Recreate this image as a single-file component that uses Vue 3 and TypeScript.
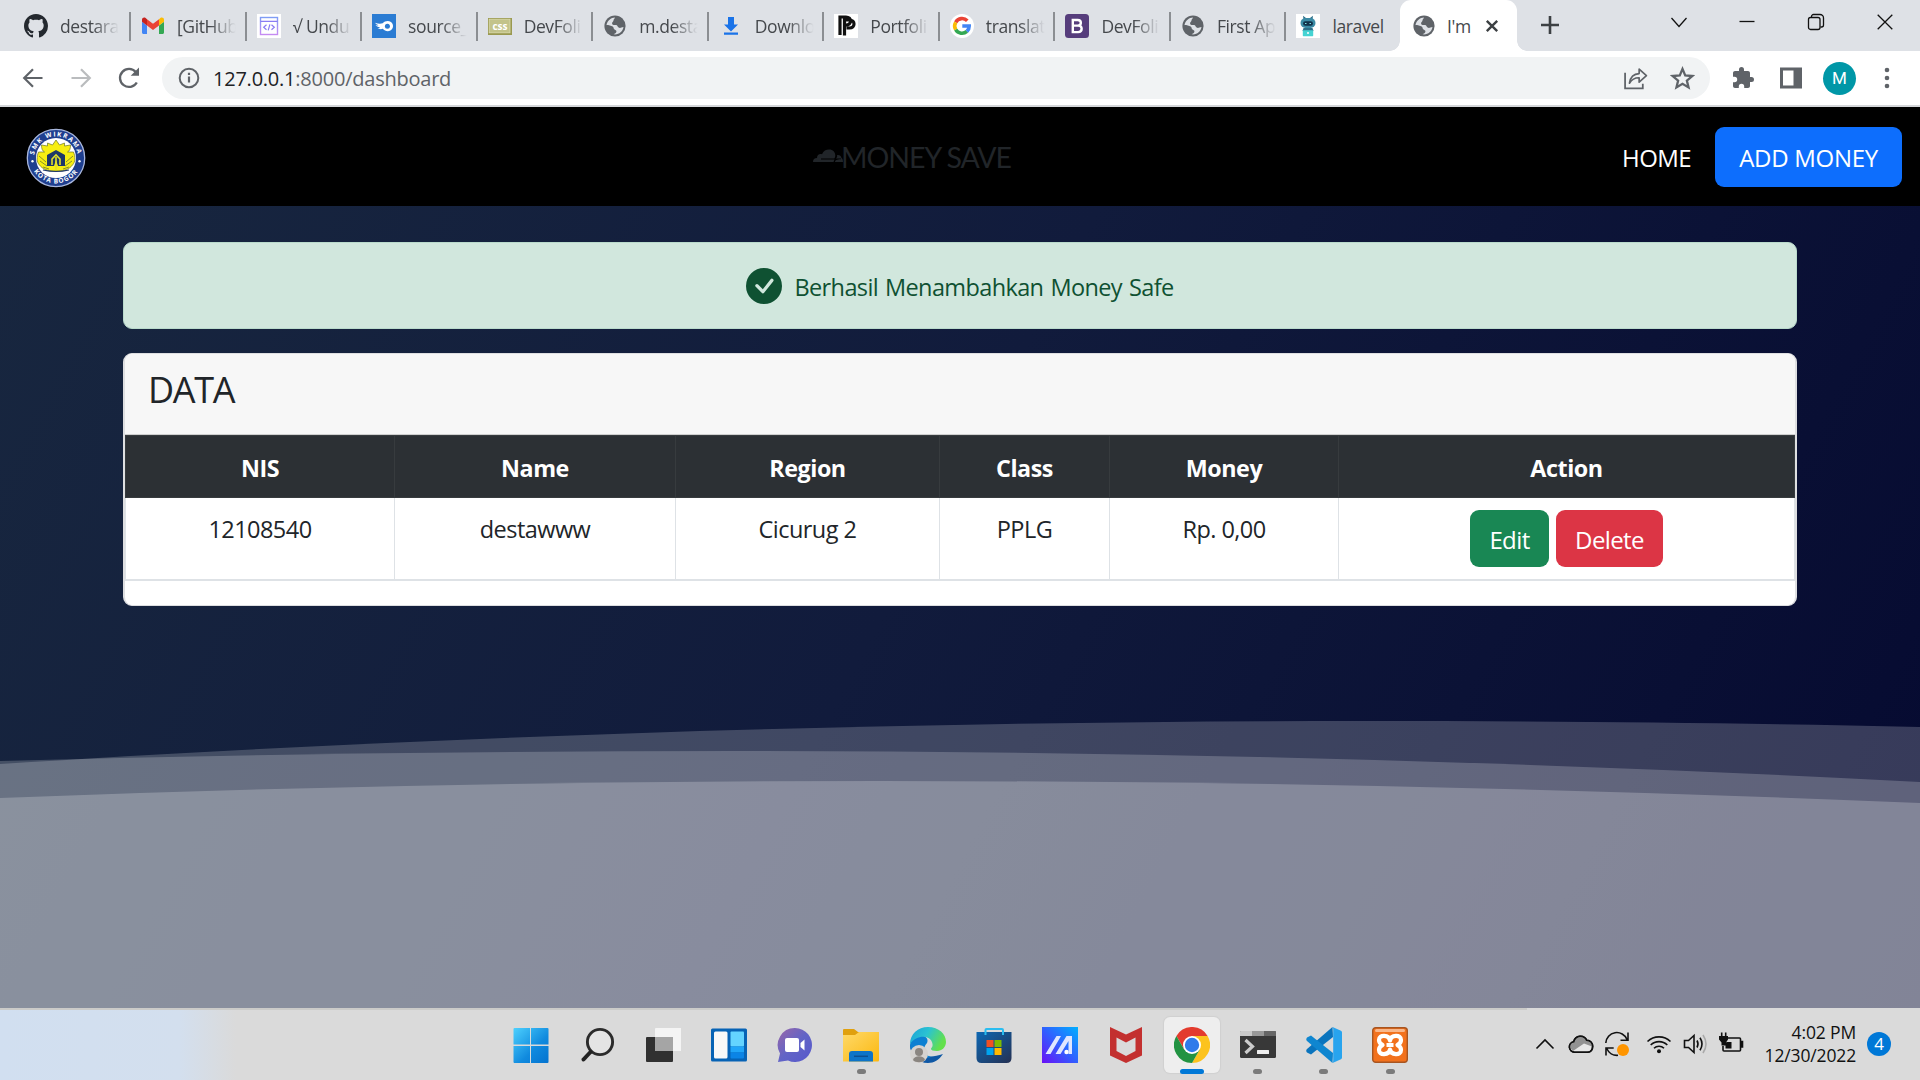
<script setup lang="ts">
interface Tab {
  icon: string
  title: string
}

const tabs: Tab[] = [
  { icon: 'github', title: 'destara' },
  { icon: 'gmail', title: '[GitHub' },
  { icon: 'code', title: '√ Undu' },
  { icon: 'source', title: 'source_' },
  { icon: 'css', title: 'DevFoli' },
  { icon: 'globe', title: 'm.desta' },
  { icon: 'download', title: 'Downlo' },
  { icon: 'portfolio', title: 'Portfoli' },
  { icon: 'google', title: 'translat' },
  { icon: 'bootstrap', title: 'DevFoli' },
  { icon: 'globe', title: 'First Ap' },
  { icon: 'laravel', title: 'laravel' },
]

const columns = [
  { label: 'NIS', width: 269 },
  { label: 'Name', width: 281 },
  { label: 'Region', width: 264 },
  { label: 'Class', width: 170 },
  { label: 'Money', width: 229 },
]
const row = ['12108540', 'destawww', 'Cicurug 2', 'PPLG', 'Rp. 0,00']

interface App {
  name: string
  state?: 'open' | 'active'
}

const apps: App[] = [
  { name: 'start' },
  { name: 'search' },
  { name: 'taskview' },
  { name: 'widgets' },
  { name: 'chat' },
  { name: 'explorer', state: 'open' },
  { name: 'edge' },
  { name: 'store' },
  { name: 'asus' },
  { name: 'mcafee' },
  { name: 'chrome', state: 'active' },
  { name: 'terminal', state: 'open' },
  { name: 'vscode', state: 'open' },
  { name: 'xampp', state: 'open' },
]
</script>

<template>
  <div class="screen">
    <!-- shared symbols -->
    <svg class="defs" width="0" height="0">
      <symbol id="globe" viewBox="0 0 24 24">
        <circle cx="12" cy="12" r="10.6" fill="#5f6368" />
        <path fill="#dee1e6" d="M12 3.5C8 3.7 4.300 6.500 3.500 11c2.200.9 4.600.2 6.200 1.600 1.500 1.400.5 2.900 2.600 3.300 1.300.3 1.400 1.700.8 2.500-.8 1-1.700 1.300-2.600 1.900 5 .8 9.300-2.500 10-7.300-2.200.4-3.200 1.400-4.900.6-1.400-.7-.9-2.200-2.300-2.500-1.700-.4-3.700.3-4.200-1.400-.4-1.500 1.400-1.900 1.400-3.100 0-1.300 1-1.600 1.500-3.100Z" />
      </symbol>
    </svg>

    <header class="tabstrip">
      <div v-for="(tab, i) in tabs" :key="i" class="tab" :class="{ first: i === 0 }">
        <svg v-if="tab.icon === 'github'" class="fav" viewBox="0 0 16 16"><path fill="#24292f" d="M8 0C3.580 0 0 3.580 0 8c0 3.540 2.290 6.530 5.470 7.590.4.070.55-.17.55-.38 0-.19-.010-.82-.010-1.490-2.010.37-2.530-.49-2.690-.94-.09-.23-.48-.94-.82-1.130-.28-.15-.68-.52-.010-.53.63-.010 1.080.58 1.230.82.72 1.210 1.870.87 2.330.66.070-.52.28-.87.51-1.070-1.780-.2-3.640-.89-3.640-3.950 0-.87.31-1.590.82-2.150-.08-.2-.36-1.020.08-2.120 0 0 .67-.21 2.200.82.64-.18 1.320-.27 2-.27s1.360.09 2 .27c1.530-1.040 2.200-.82 2.200-.82.44 1.100.16 1.920.08 2.120.51.56.82 1.270.82 2.150 0 3.070-1.870 3.750-3.650 3.950.29.25.54.73.54 1.480 0 1.070-.010 1.930-.010 2.200 0 .21.15.46.55.38A8.010 8.010 0 0 0 16 8c0-4.420-3.580-8-8-8" /></svg>
        <svg v-else-if="tab.icon === 'gmail'" class="fav" viewBox="0 0 24 24">
          <path fill="#4285f4" d="M2.500 20H6v-8.500L1 7.800v10.700c0 .8.700 1.500 1.500 1.500Z" />
          <path fill="#34a853" d="M18 20h3.500c.8 0 1.500-.7 1.500-1.500V7.800l-5 3.700Z" />
          <path fill="#fbbc04" d="M18 5.200v6.300l5-3.700v-2c0-1.900-2.100-2.900-3.600-1.800Z" />
          <path fill="#ea4335" d="M6 11.500V5.200l6 4.500 6-4.500v6.300L12 16Z" />
          <path fill="#c5221f" d="M1 5.800v2l5 3.700V5.200L4.600 4C3.100 2.900 1 3.900 1 5.800Z" />
        </svg>
        <svg v-else-if="tab.icon === 'code'" class="fav" viewBox="0 0 24 24">
          <defs><linearGradient id="codeg" x1="0" y1="0" x2="0" y2="1"><stop offset="0" stop-color="#7f9cf5" /><stop offset="1" stop-color="#c58bf2" /></linearGradient></defs>
          <rect width="24" height="24" fill="#fff" />
          <rect x="3.500" y="3.500" width="17" height="17" fill="none" stroke="url(#codeg)" stroke-width="1.400" />
          <path d="M3.500 7.300h17M9.500 10.800 6.700 13.300l2.800 2.500M14.500 10.800l2.800 2.500-2.800 2.500M12.900 10.300l-1.700 6" fill="none" stroke="#8a7cf3" stroke-width="1.200" />
        </svg>
        <svg v-else-if="tab.icon === 'source'" class="fav" viewBox="0 0 24 24">
          <rect width="24" height="24" fill="#2b7cd3" />
          <path fill="#fff" d="M3 8.800c3 .9 5.200 1.200 7.700.5 2.200-2.600 5.800-3.200 8.300-1.200 3 2.400 2.600 6.800-.6 8.500-2.600 1.400-5.800.5-7.600-1.800-1.900.6-3.700.4-5.300-.7 1.200 0 1.900-.2 2.500-.8-2-.3-3.700-1-4.500-2.200 1.100.4 2.300.4 3.100.2C5.200 10.800 3.700 10 3 8.800Z" />
          <circle cx="15.400" cy="12.300" r="2.500" fill="#2b7cd3" />
        </svg>
        <svg v-else-if="tab.icon === 'css'" class="fav" viewBox="0 0 24 24">
          <rect y="4" width="24" height="17" fill="#9a9950" />
          <rect x="1.200" y="5.200" width="20.800" height="13.600" fill="#c3c38a" stroke="#dcdcb0" stroke-width=".8" />
          <text x="12" y="16" class="css-mark" text-anchor="middle">css</text>
        </svg>
        <svg v-else-if="tab.icon === 'globe'" class="fav" viewBox="0 0 24 24"><use href="#globe" /></svg>
        <svg v-else-if="tab.icon === 'download'" class="fav" viewBox="0 0 24 24"><path fill="#1a73e8" d="M9 3h6v7.500h4L12 17.500 5 10.500h4ZM5 18.500h14v2.300H5Z" /></svg>
        <svg v-else-if="tab.icon === 'portfolio'" class="fav" viewBox="0 0 24 24">
          <rect width="24" height="24" fill="#fff" />
          <path d="M6 21V3h6c6 0 6 8 0 8H9M10.500 21.500V6h5c6 0 6 8 0 8h-3" fill="none" stroke="#111" stroke-width="3.200" />
        </svg>
        <svg v-else-if="tab.icon === 'google'" class="fav" viewBox="0 0 24 24">
          <circle cx="12" cy="12" r="12" fill="#fff" />
          <g fill="none" stroke-width="3.600">
            <path stroke="#ea4335" d="M17.300 6.800A7.300 7.300 0 0 0 5.700 8.300" />
            <path stroke="#fbbc05" d="M5.700 8.300a7.300 7.300 0 0 0 0 7.400" />
            <path stroke="#34a853" d="M5.700 15.700a7.300 7.300 0 0 0 11.200 1.700" />
            <path stroke="#4285f4" d="M16.900 17.400A7.300 7.300 0 0 0 19.200 12H12.300" />
          </g>
        </svg>
        <svg v-else-if="tab.icon === 'bootstrap'" class="fav" viewBox="0 0 24 24">
          <rect width="24" height="24" rx="3.500" fill="#563d7c" />
          <path d="M7.800 6h4.900c4.200 0 4.200 5.600 0 5.600H7.800ZM7.800 11.600h5.400c4.600 0 4.600 6.500 0 6.500H7.800Z" fill="none" stroke="#fff" stroke-width="2.400" />
        </svg>
        <svg v-else class="fav" viewBox="0 0 24 24">
          <rect width="24" height="24" fill="#fff" />
          <path d="M7.500 5 7 1.800l3 2.300h4l3-2.300-.5 3.200" fill="#2e6f89" />
          <rect x="4.500" y="4" width="15" height="10" rx="5" fill="#3b8ba5" />
          <rect x="7" y="7.200" width="10" height="4.600" rx="2.300" fill="#12324a" />
          <path d="M9 9.500h1.500M13.500 9.500H15" stroke="#7fe5e6" stroke-width="1.200" />
          <path d="M7.500 14h9l1 3h-11Z" fill="#2e6f89" />
          <rect x="6.800" y="16.200" width="10.400" height="6" rx=".6" fill="#45d3d3" />
          <circle cx="12" cy="19" r="1" fill="#fff" />
        </svg>
        <span class="tab-title" :class="{ whole: tab.icon === 'laravel' }">{{ tab.title }}</span>
      </div>
      <div class="tab active">
        <svg class="fav" viewBox="0 0 24 24"><use href="#globe" /></svg>
        <span class="tab-title whole">I'm</span>
        <svg class="tab-close" viewBox="0 0 14 14"><path d="m1.800 1.800 10.400 10.400m0-10.400L1.800 12.200" stroke="#3c4043" stroke-width="2.400" /></svg>
      </div>
      <svg class="plus" viewBox="0 0 20 20"><path d="M10 1v18M1 10h18" stroke="#3c4043" stroke-width="2.600" /></svg>
      <div class="window-buttons">
        <svg class="chevron" viewBox="0 0 18 18"><path d="m1.500 5 7.500 8.500L16.500 5" /></svg>
        <svg viewBox="0 0 18 18"><path d="M1.500 8.500h15" /></svg>
        <svg viewBox="0 0 18 18"><rect x="1.500" y="4.500" width="11.500" height="12" rx="2" /><path d="M4.500 4.300V3.500a2 2 0 0 1 2-2h6.500a3.500 3.500 0 0 1 3.500 3.500v7a2 2 0 0 1-2 2h-1" /></svg>
        <svg viewBox="0 0 18 18"><path d="m1.700 1.700 14.600 14.600m0-14.600L1.700 16.300" /></svg>
      </div>
    </header>

    <div class="toolbar">
      <svg class="nav-icon" viewBox="0 0 24 24"><path d="M21.500 12H4M12 3.200 3.200 12l8.800 8.800" fill="none" stroke="#5f6368" stroke-width="2.200" /></svg>
      <svg class="nav-icon" viewBox="0 0 24 24"><path d="M2.500 12H20M12 3.200l8.800 8.800-8.800 8.800" fill="none" stroke="#babcbe" stroke-width="2.200" /></svg>
      <svg class="nav-icon" viewBox="0 0 24 24"><path d="M19.800 16.500A9 9 0 1 1 18.800 6" fill="none" stroke="#5f6368" stroke-width="2.300" /><path d="M22 1.500v8.300h-8.300Z" fill="#5f6368" /></svg>
      <div class="omnibox">
        <svg class="info" viewBox="0 0 22 22"><circle cx="11" cy="11" r="9.300" fill="none" stroke="#5f6368" stroke-width="2" /><path d="M11 9.600v6M11 5.800v2.200" stroke="#5f6368" stroke-width="2.200" /></svg>
        <span class="url"><b>127.0.0.1</b>:8000/dashboard</span>
        <svg class="share" viewBox="0 0 24 24"><path d="M2 6.500v15h17V17" fill="none" stroke="#5f6368" stroke-width="1.700" /><path d="M6.200 16.500C7 11 9.500 7.500 15.500 7.300V3l7 6.300-7 6.200v-4.200C11.300 11.200 8.500 12.800 6.200 16.500Z" fill="none" stroke="#5f6368" stroke-width="1.600" stroke-linejoin="round" /></svg>
        <svg class="star" viewBox="0 0 24 24"><path d="m12 2.800 2.600 6.200 6.800.6-5.200 4.400 1.600 6.600-5.800-3.500-5.800 3.500L7.800 14 2.600 9.600l6.800-.6Z" fill="none" stroke="#5f6368" stroke-width="2.200" /></svg>
      </div>
      <svg class="puzzle" viewBox="0 0 24 24"><path fill="#5f6368" d="M20.500 11H19V7c0-1.100-.9-2-2-2h-4V3.500a2.500 2.500 0 0 0-5 0V5H4c-1.100 0-2 .9-2 2v3.800h1.500a2.700 2.700 0 0 1 0 5.400H2V20c0 1.100.9 2 2 2h3.800v-1.500a2.700 2.700 0 0 1 5.400 0V22H17c1.100 0 2-.9 2-2v-4h1.500a2.500 2.500 0 0 0 0-5Z" /></svg>
      <svg class="panel" viewBox="0 0 22 22"><path fill="#5f6368" fill-rule="evenodd" d="M0 0.500h22v21H0ZM3 3.500v15h10.500v-15Z" /></svg>
      <div class="avatar">M</div>
      <svg class="dots" viewBox="0 0 6 22"><circle cx="3" cy="3" r="2.300" /><circle cx="3" cy="11" r="2.300" /><circle cx="3" cy="19" r="2.300" /></svg>
    </div>

    <main class="page">
      <svg class="waves" viewBox="0 0 1920 901" preserveAspectRatio="none">
        <path fill="#fff" fill-opacity=".2" d="M0 657C400 631 880 614 1359 614c200 0 390 2 561 6v281H0Z" />
        <path fill="#fff" fill-opacity=".2" d="M0 654Q367 644 735 644 1327 644 1920 675V901H0Z" />
        <path fill="#fff" fill-opacity=".225" d="M0 691Q441 674 882 674 1401 674 1920 696V901H0Z" />
      </svg>

      <nav class="navbar">
        <svg class="seal" viewBox="0 0 60 60">
          <defs>
            <path id="arcTop" d="M8.500 35A22 22 0 1 1 51.500 35" />
            <path id="arcBottom" d="M4 33A26.300 26.300 0 0 0 56 33" />
          </defs>
          <circle cx="30" cy="30" r="28.700" fill="#1f3f8f" stroke="#a9b7dc" stroke-width="1.300" />
          <circle cx="30" cy="30" r="20" fill="#fff" />
          <text class="seal-text top"><textPath href="#arcTop" startOffset="50%" text-anchor="middle">SMK WIKRAMA</textPath></text>
          <text class="seal-text"><textPath href="#arcBottom" startOffset="50%" text-anchor="middle">KOTA BOGOR</textPath></text>
          <circle cx="6.500" cy="33.300" r="1.200" fill="#fff" /><circle cx="53.500" cy="33.300" r="1.200" fill="#fff" />
          <path fill="#f7ee12" stroke="#6c7527" stroke-width=".7" d="M30 12l3.500 5 5-2v3l6-1c0 4-1 6-3 7l6 0c2 5 2 10-1 13-3 4-8 6-14 6h-5c-6 0-11-2-14-6-3-3-3-8-1-13h6c-2-1-3-3-3-7l6 1v-3l5 2Z" />
          <path fill="none" stroke="#7b842a" stroke-width=".9" d="M13 28l7 6M14 33l7 5M17 39l6 2M47 28l-7 6M46 33l-7 5M43 39l-6 2" />
          <path fill="#1f3768" d="M30 22l9 5v11h-7l-2-6-2 6h-7V27Z" /><path d="M26 37v-6l4-4 4 4v6M30 29v13" fill="none" stroke="#e2df2a" stroke-width="1.600" />
          <path d="M17 42q13 3 26 0" fill="none" stroke="#1f3768" stroke-width="1.200" />
        </svg>
        <div class="brand">
          <svg class="cloud" viewBox="0 0 30 14"><path d="M0 13c0-2.500 1.300-4 4-4 0-3 2.300-4.500 5-3.700C10.500 1.800 13 .5 16 .5c4 0 6.300 2.600 6.300 6.300 0 1-.4 2-1 2.800H8v.8h13.500l-1 2.600ZM22 13c.3-1.800 1.500-2.700 6-2.700V9.500h-5c1.400-1.300 1.300-2.600 1-3.500 2.500-.3 4.200.8 4.500 3 1 .5 1.500 2 1.500 4Z" /></svg>
          <span>MONEY SAVE</span>
        </div>
        <div class="links">
          <a class="home">HOME</a>
          <a class="add">ADD MONEY</a>
        </div>
      </nav>

      <div class="container">
        <div class="alert">
          <svg viewBox="0 0 16 16"><path fill="#0f5132" d="M16 8A8 8 0 1 1 0 8a8 8 0 0 1 16 0m-3.970-3.030a.75.75 0 0 0-1.080.022L7.477 9.417 5.384 7.323a.75.75 0 0 0-1.060 1.060L6.970 11.030a.75.75 0 0 0 1.079-.02l3.992-4.990a.75.75 0 0 0-.010-1.050z" /></svg>
          <span>Berhasil Menambahkan Money Safe</span>
        </div>

        <section class="card">
          <h3 class="card-header">DATA</h3>
          <table>
            <colgroup>
              <col v-for="c in columns" :key="c.label" :style="{ width: c.width + 'px' }">
              <col>
            </colgroup>
            <thead>
              <tr>
                <th v-for="c in columns" :key="c.label">{{ c.label }}</th>
                <th>Action</th>
              </tr>
            </thead>
            <tbody>
              <tr>
                <td v-for="(cell, i) in row" :key="i">{{ cell }}</td>
                <td class="actions">
                  <div>
                    <button class="edit">Edit</button>
                    <button class="delete">Delete</button>
                  </div>
                </td>
              </tr>
            </tbody>
          </table>
        </section>
      </div>
    </main>

    <footer class="taskbar">
      <div class="apps">
        <div v-for="app in apps" :key="app.name" class="app" :class="app.state">
          <svg v-if="app.name === 'start'" viewBox="0 0 36 36">
            <defs><linearGradient id="winAll" x1="0" y1="0" x2="36" y2="36" gradientUnits="userSpaceOnUse"><stop offset="0" stop-color="#4fd3ff" /><stop offset=".6" stop-color="#108ade" /><stop offset="1" stop-color="#0472cf" /></linearGradient></defs>
            <path fill="url(#winAll)" d="M1.500 1h15.500v16.500H.5V2a1 1 0 0 1 1-1ZM18 1h16.500a1 1 0 0 1 1 1v15.500H18ZM.5 19H17v17H1.500a1 1 0 0 1-1-1ZM18 19h17.500v16a1 1 0 0 1-1 1H18Z" />
          </svg>
          <svg v-else-if="app.name === 'search'" viewBox="0 0 36 36"><circle cx="21" cy="15" r="12.600" fill="#e4e4e4" stroke="#2b2b2b" stroke-width="2.900" /><path d="m11.500 25-7 7.500" stroke="#222" stroke-width="4" stroke-linecap="round" /></svg>
          <svg v-else-if="app.name === 'taskview'" viewBox="0 0 36 36"><rect x="1" y="10" width="27" height="25" rx="1" fill="#303030" /><rect x="10" y="1" width="26.500" height="23" rx="1" fill="#f4f4f4" /><rect x="10" y="10" width="18" height="14" fill="#a5a5a5" /></svg>
          <svg v-else-if="app.name === 'widgets'" viewBox="0 0 36 36"><rect y="1.500" width="36" height="33" rx="1.500" fill="#0763b5" /><rect x="3" y="4.500" width="13.500" height="27" rx="1.500" fill="#f8f8f8" /><rect x="19.500" y="4.500" width="13.500" height="15" rx="1" fill="#64d4ff" /><rect x="19.500" y="19.500" width="13.500" height="6" fill="#20a5f8" /><rect x="19.500" y="25.500" width="13.500" height="6" rx="1" fill="#0b84e6" /></svg>
          <svg v-else-if="app.name === 'chat'" viewBox="0 0 36 36">
            <defs><linearGradient id="chat" x1="0" y1="0" x2="1" y2="1"><stop offset="0" stop-color="#9a67a8" /><stop offset=".5" stop-color="#6264c6" /><stop offset="1" stop-color="#5658cc" /></linearGradient></defs>
            <path fill="url(#chat)" d="M18 1a17 17 0 1 1-7 32.500L1 35l2-8.500A17 17 0 0 1 18 1Z" /><rect x="8" y="11" width="14" height="14" rx="2" fill="#fff" /><path d="m23.500 16 4-3.500v11l-4-3.500Z" fill="#fff" />
          </svg>
          <svg v-else-if="app.name === 'explorer'" viewBox="0 0 36 36">
            <defs><linearGradient id="fold" x1="0" y1="0" x2="1" y2="1"><stop offset="0" stop-color="#ffd969" /><stop offset="1" stop-color="#fbb810" /></linearGradient></defs>
            <path d="M0 3q0-1 1-1h10l4 3h20q1 0 1 1v5H0Z" fill="#e0a00e" /><path d="M0 8h12l4-3h20v28q0 1.500-1 1.500H0Z" fill="url(#fold)" /><path d="M6 34.500V27q0-3 3-3h18q3 0 3 3v7.500Z" fill="#0d74c8" /><path d="M11 29.300h14" stroke="#0c4f91" stroke-width="1.500" />
          </svg>
          <svg v-else-if="app.name === 'edge'" viewBox="0 0 36 36">
            <defs><linearGradient id="edgeTop" x1="0" y1="0" x2="1" y2=".4"><stop offset="0" stop-color="#1aa0d8" /><stop offset=".5" stop-color="#2bc3d2" /><stop offset="1" stop-color="#63e04b" /></linearGradient></defs>
            <path fill="#0f58a5" d="M7 20c2 9 12 12 26 7-4 6-9 9-15 9C8 36 0 28 0 18Z" />
            <path fill="#0c80d2" d="M0 18C1 9 9 7 14 9c4 2 4 5 3 7-5 5-3 12 4 14-10 3-20-1-21-12Z" />
            <path fill="url(#edgeTop)" d="M0 17C0 7 8 0 18 0c11 0 18 7 18 15 0 5-4 9-9 9-4 0-6-1-6-2s2-2 1.500-5C21 8 7 7 0 17Z" />
            <circle cx="9" cy="27" r="9" fill="#d5d2cf" /><circle cx="9" cy="25" r="4" fill="#8a8580" /><path d="M3 33c1-5 11-5 12 0-2 3-10 3-12 0Z" fill="#8a8580" />
          </svg>
          <svg v-else-if="app.name === 'store'" viewBox="0 0 36 36">
            <defs><linearGradient id="store" x1="0" y1="0" x2="1" y2="1"><stop offset="0" stop-color="#0d67b3" /><stop offset="1" stop-color="#253153" /></linearGradient></defs>
            <path d="M9.500 7V3q0-1 1-1h15.500q1 0 1 1v4" fill="none" stroke="#2bbdf0" stroke-width="2" /><path d="M.5 5h35v26q0 5-5 5h-25q-5 0-5-5Z" fill="url(#store)" /><path d="M9.500 5V8M27 5v3" stroke="#2bbdf0" stroke-width="2" /><path fill="#f25022" d="M10.500 13h7v7h-7Z" /><path fill="#7fba00" d="M18.500 13h7v7h-7Z" /><path fill="#00a4ef" d="M10.500 21h7v7h-7Z" /><path fill="#ffb900" d="M18.500 21h7v7h-7Z" />
          </svg>
          <svg v-else-if="app.name === 'asus'" viewBox="0 0 36 36">
            <defs><linearGradient id="asus" x1="0" y1="1" x2="1" y2="0"><stop offset="0" stop-color="#6a10f5" /><stop offset=".5" stop-color="#3060ff" /><stop offset="1" stop-color="#00b0ff" /></linearGradient></defs>
            <rect width="36" height="36" fill="url(#asus)" /><path fill="#dfe6ff" d="M14.500 9h4.500L8.500 27H3.500ZM24.500 9H30v18h-3.500V14L18.500 27H13.500Z" /><circle cx="24.500" cy="25" r="2.200" fill="#fff" />
          </svg>
          <svg v-else-if="app.name === 'mcafee'" viewBox="0 0 36 36"><path fill="#c3302f" fill-rule="evenodd" d="M2 0l16 7.500L34 0v28.500L18 36 2 28.500ZM8.500 10.500V24l9.500 5 9.500-5V10.500L18 15.500Z" /></svg>
          <svg v-else-if="app.name === 'chrome'" viewBox="0 0 36 36">
            <path fill="#e33b2e" d="M2.400 9A18 18 0 0 1 33.600 9H18l-7.800 13.500Z" /><path fill="#fcc31e" d="M33.600 9A18 18 0 0 1 18 36l7.800-13.500L18 9Z" /><path fill="#229342" d="M2.400 9A18 18 0 0 0 18 36l7.800-13.500H10.200Z" /><circle cx="18" cy="18" r="9" fill="#fff" /><circle cx="18" cy="18" r="7.200" fill="#2f7bea" />
          </svg>
          <svg v-else-if="app.name === 'terminal'" viewBox="0 0 36 36"><rect y="4" width="36" height="27" rx="1.500" fill="#383838" /><path d="M0 9V5q0-1 1-1h11v5Z" fill="#c9c9c9" /><path d="M12 4h12v5H12Z" fill="#999" /><path d="M24 4h11q1 0 1 1v4H24Z" fill="#666" /><path d="m5.500 13 7 6.500-7 6.500" fill="none" stroke="#ccc" stroke-width="3.200" /><rect x="17" y="23" width="12" height="4" rx=".5" fill="#eee" /></svg>
          <svg v-else-if="app.name === 'vscode'" viewBox="0 0 36 36"><path fill="#0a74bd" d="M26.500 0 27 10 5 27.500 1 25.500q-1.500-2 0-3.500Z" /><path fill="#0f86d0" d="M26.500 36 27 26 5 8.500 1 10.500q-1.500 2 0 3.500Z" /><path fill="#28a4ee" d="M26.500 0 35 3.800q1 .5 1 1.700v25q0 1.200-1 1.700L26.500 36q.7-.8.7-2V2q0-1.200-.7-2Z" /></svg>
          <svg v-else viewBox="0 0 36 36"><rect x=".7" y=".7" width="34.600" height="34.600" rx="3" fill="#f2711c" stroke="#a85520" stroke-width="1.400" /><rect x="3" y="2" width="30" height="3" rx="1.500" fill="#f9b78a" /><path d="M18 13.500c1-5.500 11-6.500 11-.5 0 2.500-1.500 4-3.500 5 2 1 3.500 2.500 3.500 5 0 6-10 5-11-.5-1 5.500-11 6.500-11 .5 0-2.500 1.500-4 3.500-5-2-1-3.500-2.500-3.500-5 0-6 10-5 11 .5Z" fill="none" stroke="#fff" stroke-width="4.200" stroke-linejoin="round" /><path d="M14.500 18h7" stroke="#fff" stroke-width="4" /></svg>
        </div>
      </div>
      <div class="tray">
        <svg class="t-chevron" viewBox="0 0 20 12"><path d="m1.500 10.500 8.500-8.500 8.500 8.500" /></svg>
        <svg class="t-cloud" viewBox="0 0 26 20"><path d="M6.500 18.200a5.300 5.300 0 0 1-.8-10.500C7.500 1 16 .3 18.700 6.300c8 .3 7.600 11.900.8 11.900Z" fill="#e7e7e7" /><path d="M2.300 10.500l3.700-2.800C8 1.500 16 1 18.500 6.500L23 8.500l1 4-8-3-11 7.500q-3-2-2.700-6.500Z" fill="#929292" stroke="none" /><path d="M6.500 18.200a5.300 5.300 0 0 1-.8-10.500C7.500 1 16 .3 18.700 6.300c8 .3 7.600 11.900.8 11.900Z" /></svg>
        <svg class="t-sync" viewBox="0 0 26 26"><path d="M1.800 12A11 11 0 0 1 23 8.500M24 1.500v7.700h-7.500M2 24.500V17h7.700M2.800 17.500A11 11 0 0 0 14 24.300" /><circle cx="19" cy="19" r="6" fill="#ff9500" stroke="none" /></svg>
        <svg class="t-wifi" viewBox="0 0 26 19"><path d="M1.500 6.500a16.500 16.500 0 0 1 23 0M4.700 10a11.800 11.800 0 0 1 16.600 0M8 13.300a7.100 7.100 0 0 1 10 0" /><circle cx="13" cy="16.300" r="2" fill="#111" stroke="none" /></svg>
        <svg class="t-volume" viewBox="0 0 26 22"><path d="M1.500 7.500h4L11 2.500v17l-5.500-5h-4Z" /><path d="M14 7.500q2 3.500 0 7M17 4.700q4 6.300 0 12.600" /><path d="M20 2q6 9 0 18" stroke="#aaa" /></svg>
        <svg class="t-battery" viewBox="0 0 26 22"><path d="M10 6h11.500q1 0 1 1v11q0 1-1 1H6q-1 0-1-1v-4" /><path d="M22.500 9.500h2v5.500h-2" fill="#111" /><path d="M8.500 10h5v6.500h-6v-5Z" fill="#111" stroke="none" /><path d="M3.700.5v4M7.700.5v4" /><path d="M1 4h9v3.500L8 10.500v3H3.500v-3L1 7.500Z" fill="#111" stroke="none" /></svg>
        <div class="clock"><span>4:02 PM</span><span>12/30/2022</span></div>
        <div class="badge">4</div>
      </div>
    </footer>
  </div>
</template>

<style>
body {
  margin: 0;
  overflow: hidden;
}
</style>

<style scoped>
* {
  box-sizing: border-box;
}

.screen {
  width: 1920px;
  height: 1080px;
  display: flex;
  flex-direction: column;
  overflow: hidden;
  font-family: 'Open Sans', 'Noto Sans', sans-serif;
  background: #fff;
}

svg {
  display: block;
  flex: none;
}

.defs {
  position: absolute;
}

/* tab strip */
.tabstrip {
  height: 51px;
  flex: none;
  display: flex;
  background: #dee1e6;
}

.tab {
  width: 115.550px;
  height: 51px;
  flex: none;
  padding-left: 12px;
  display: flex;
  align-items: center;
  background: linear-gradient(#8b8e92, #8b8e92) no-repeat 0 12px / 2px 29px;
}

.tab.first {
  width: 129px;
  padding-left: 24px;
  background: none;
}

.fav {
  width: 24px;
  height: 24px;
}

.tab-title {
  width: 60px;
  margin-left: 12px;
  overflow: hidden;
  white-space: nowrap;
  font-size: 17.500px;
  letter-spacing: -0.4px;
  line-height: 26px;
  color: #45484c;
  -webkit-mask-image: linear-gradient(90deg, #000 55%, transparent 98%);
  mask-image: linear-gradient(90deg, #000 55%, transparent 98%);
}

.tab-title.whole {
  -webkit-mask-image: none;
  mask-image: none;
}

.tab.active {
  width: 117px;
  background: #fff;
  border-radius: 11px 11px 0 0;
  position: relative;
  padding-left: 12px;
}

.tab.active::before,
.tab.active::after {
  content: '';
  position: absolute;
  bottom: 0;
  width: 10px;
  height: 10px;
}

.tab.active::before {
  left: -10px;
  background: radial-gradient(circle at 0 0, transparent 9.500px, #fff 10px);
}

.tab.active::after {
  right: -10px;
  background: radial-gradient(circle at 100% 0, transparent 9.500px, #fff 10px);
}

.tab.active .tab-title {
  width: 26px;
  margin-left: 11px;
}

.tab-close {
  width: 14px;
  height: 14px;
  margin-left: 12px;
}

.plus {
  width: 20px;
  height: 20px;
  margin: 15px 0 0 23px;
}

.window-buttons {
  margin: 13px 26px 0 auto;
  display: flex;
  gap: 51px;
}

.window-buttons svg {
  width: 18px;
  height: 18px;
  fill: none;
  stroke: #111;
  stroke-width: 1.300;
}

.window-buttons .chevron {
  margin-right: -1px;
}

.css-mark {
  font: bold 10px 'Open Sans', sans-serif;
  fill: #fff;
}

/* toolbar */
.toolbar {
  height: 56px;
  flex: none;
  display: flex;
  align-items: center;
  padding-left: 21px;
  border-bottom: 2px solid #d5d7da;
}

.nav-icon {
  width: 24px;
  height: 24px;
  margin-right: 24px;
}

.omnibox {
  width: 1548px;
  height: 42px;
  margin-left: -3px;
  padding: 0 15px 0 16px;
  border-radius: 21px;
  background: #f1f3f4;
  display: flex;
  align-items: center;
}

.info {
  width: 22px;
  height: 22px;
}

.url {
  margin: 0 auto 0 13px;
  font-size: 20px;
  letter-spacing: -0.23px;
  color: #5f6368;
}

.url b {
  font-weight: 400;
  color: #202124;
}

.share {
  width: 25px;
  height: 25px;
  margin-right: 22px;
}

.star {
  width: 25px;
  height: 25px;
}

.puzzle {
  width: 24px;
  height: 24px;
  margin-left: 21px;
}

.panel {
  width: 22px;
  height: 22px;
  margin-left: 25px;
}

.avatar {
  width: 33px;
  height: 33px;
  margin-left: 21px;
  border-radius: 50%;
  background: #0097a7;
  color: #fff;
  font: 17px/33px Roboto, sans-serif;
  text-align: center;
}

.dots {
  width: 6px;
  height: 22px;
  margin-left: 28px;
  fill: #5f6368;
}

/* page */
.page {
  position: relative;
  height: 901px;
  flex: none;
  background: linear-gradient(118deg, #18273f 0%, #111b3c 48%, #050930 100%);
}

.waves {
  position: absolute;
  inset: 0;
  width: 100%;
  height: 100%;
}

.navbar {
  position: relative;
  height: 99px;
  padding: 0 18px 0 26px;
  background: #000;
  display: grid;
  grid-template-columns: 787px 1fr auto;
  align-items: center;
}

.seal {
  width: 60px;
  height: 60px;
  margin-top: 2px;
}

.seal-text {
  font: bold 6.500px 'Open Sans', sans-serif;
  letter-spacing: 0.9px;
  fill: #fff;
}

.seal-text.top {
  letter-spacing: 1.300px;
}

.brand {
  display: flex;
  align-items: center;
  color: #212529;
  font: 28.500px/34px Lato, sans-serif;
  letter-spacing: -1px;
}

.brand span {
  margin-left: -2px;
}

.cloud {
  width: 30px;
  height: 14px;
  margin-top: -1px;
  fill: #212529;
}

.links {
  display: flex;
  align-items: center;
  gap: 24px;
  color: #fff;
  font-size: 24px;
  letter-spacing: -0.6px;
}

.home {
  padding-top: 2px;
}

.add {
  width: 187px;
  height: 60px;
  border-radius: 9px;
  background: #0d6efd;
  line-height: 61px;
  text-align: center;
  letter-spacing: -0.3px;
}

.container {
  position: relative;
  width: 1674px;
  margin: 36px auto 0;
}

.alert {
  height: 87px;
  border: 1px solid #badbcc;
  border-radius: 9px;
  background: #d1e7dd;
  color: #0f5132;
  display: flex;
  justify-content: center;
  align-items: center;
  font-size: 23.500px;
  letter-spacing: -0.62px;
  word-spacing: 1.500px;
}

.alert svg {
  width: 36px;
  height: 36px;
  margin-right: 12px;
}

.alert span {
  margin-top: 2px;
}

.card {
  height: 253px;
  margin-top: 24px;
  border: 2px solid #dedfe1;
  border-top-width: 1px;
  border-bottom-width: 1px;
  border-radius: 9px;
  background: #fff;
  overflow: hidden;
}

.card-header {
  height: 81px;
  margin: 0;
  padding: 12px 0 0 23px;
  border-bottom: 1px solid #cfcfcf;
  background: #f7f7f7;
  color: #212529;
  font-size: 36px;
  font-weight: 500;
  line-height: 48px;
  letter-spacing: -1.300px;
}

table {
  width: 1670px;
  table-layout: fixed;
  border-collapse: collapse;
  color: #212529;
  font-size: 23.500px;
}

th {
  height: 62px;
  padding: 2px 0 0;
  background: #2c3034;
  border: 1px solid #373b3e;
  color: #fff;
  font-weight: 700;
  font-size: 23.300px;
  letter-spacing: -0.45px;
  line-height: 36px;
}

td {
  height: 82px;
  padding: 13px 0 0;
  vertical-align: top;
  text-align: center;
  line-height: 36px;
  letter-spacing: -0.55px;
  border: 1px solid #dee2e6;
  border-bottom-width: 2px;
}

.actions {
  padding-top: 12px;
}

.actions div {
  display: flex;
  justify-content: center;
  gap: 7px;
}

button {
  height: 57px;
  padding: 2px 0 0;
  border: 0;
  border-radius: 9px;
  color: #fff;
  font: 24px 'Open Sans', sans-serif;
  letter-spacing: -0.6px;
}

.edit {
  width: 79px;
  background: #198754;
}

.delete {
  width: 107px;
  background: #dc3545;
}

/* taskbar */
.taskbar {
  height: 72px;
  flex: none;
  display: flex;
  padding-left: 498px;
  background:
    linear-gradient(#cbcbc9, #cbcbc9) no-repeat 0 0 / 1527px 2px,
    linear-gradient(90deg, #d1dff0 0, #d3dfee 180px, #dadada 236px);
}

.apps {
  display: flex;
}

.app {
  position: relative;
  width: 66.080px;
  height: 72px;
  padding-top: 19px;
  display: flex;
  justify-content: center;
}

.app > svg {
  position: relative;
  width: 36px;
  height: 36px;
}

.app.active::before {
  content: '';
  position: absolute;
  left: 5px;
  top: 9px;
  width: 56px;
  height: 56px;
  border-radius: 6px;
  background: #eee;
  box-shadow: 0 0 1px 1px #d0d0d0;
}

.app.open::after,
.app.active::after {
  content: '';
  position: absolute;
  top: 61px;
  width: 9px;
  height: 5px;
  border-radius: 3px;
  background: #7b7b7b;
}

.app.active::after {
  width: 24px;
  background: #0078d7;
}

.tray {
  margin-left: auto;
  padding-right: 29px;
  display: flex;
  align-items: center;
}

.tray svg {
  fill: none;
  stroke: #111;
  stroke-width: 1.600;
}

.t-chevron {
  width: 20px;
  height: 12px;
  margin-right: 13px;
}

.t-cloud {
  width: 26px;
  height: 20px;
  margin-right: 10px;
}

.t-sync {
  width: 26px;
  height: 26px;
  margin-right: 16px;
}

.t-wifi {
  width: 26px;
  height: 19px;
  margin-right: 11px;
}

.t-volume {
  width: 26px;
  height: 22px;
  margin-right: 9px;
}

.t-battery {
  width: 26px;
  height: 22px;
  margin-top: -2px;
}

.clock {
  width: 112px;
  display: flex;
  flex-direction: column;
  align-items: flex-end;
  color: #111;
  font-size: 17.500px;
  line-height: 23px;
  letter-spacing: -0.15px;
}

.badge {
  width: 24px;
  height: 24px;
  margin-left: 11px;
  border-radius: 50%;
  background: #0078d7;
  color: #fff;
  font-size: 17px;
  line-height: 24px;
  text-align: center;
}
</style>
